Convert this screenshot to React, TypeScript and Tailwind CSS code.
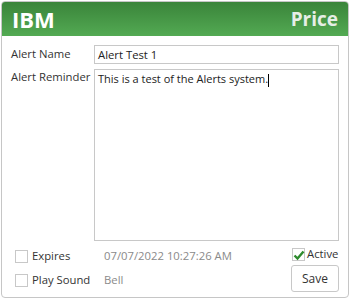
import React from 'react';

const font = { fontFamily: '"Open Sans", "Noto Sans", sans-serif' };

const CheckBox: React.FC<{ checked?: boolean }> = ({ checked }) => (
    <span className="relative inline-block w-[13px] h-[13px] border border-[#c8c8c8] bg-white shrink-0">
        {checked && (
            <svg viewBox="0 0 12 12" className="absolute left-[0px] top-[0px] w-[12px] h-[12px]">
                <path d="M1.5 6.5 L4.5 9.5 L10.5 2.5" fill="none" stroke="#2e8b2e" strokeWidth="2.4" />
            </svg>
        )}
    </span>
);

const App: React.FC = () => {
    return (
        <div className="w-[352px] h-[301px] bg-white p-[1px] pr-[3px] pb-[3px] text-[11.3px] text-[#333]" style={font}>
            <div className="h-full flex flex-col border border-[#c6c6c6] rounded-[4px] overflow-hidden">
                <div className="h-[34px] flex items-center justify-between px-[10px] bg-gradient-to-b from-[#3a843a] to-[#53aa53]">
                    <span className="text-white font-bold text-[22px] leading-none">IBM</span>
                    <span className="text-[#e6eee6] font-bold text-[19px] leading-none">Price</span>
                </div>
                <div className="flex-1 flex flex-col px-[9px] pt-[9px]">
                    <div className="flex items-center h-[19px]">
                        <span className="w-[83px] shrink-0 whitespace-nowrap">Alert Name</span>
                        <div className="flex-1 h-[19px] border border-[#c8c8c8] px-[3px] leading-[17px] text-[#222]">Alert Test 1</div>
                    </div>
                    <div className="flex mt-[5px]">
                        <span className="w-[83px] shrink-0 whitespace-nowrap leading-[15px]">Alert Reminder</span>
                        <div className="flex-1 h-[172px] border border-[#c8c8c8] px-[3px] pt-[1px] leading-[15px] text-[11px] text-[#222]">
                            This is a test of the Alerts system.<span className="inline-block w-[1px] h-[13px] bg-black align-middle" />
                        </div>
                    </div>
                    <div className="flex mt-[6px]">
                        <div className="flex flex-col gap-[9px] pl-[4px] pt-[2px]">
                            <div className="flex items-center h-[15px]">
                                <CheckBox />
                                <span className="ml-[4px] w-[72px]">Expires</span>
                                <span className="text-[#8a8a8a]">07/07/2022 10:27:26 AM</span>
                            </div>
                            <div className="flex items-center h-[15px]">
                                <CheckBox />
                                <span className="ml-[4px] w-[72px]">Play Sound</span>
                                <span className="text-[#8a8a8a]">Bell</span>
                            </div>
                        </div>
                        <div className="ml-auto flex flex-col items-start">
                            <div className="flex items-center h-[14px] mb-[4px] ml-[1px]">
                                <CheckBox checked />
                                <span className="ml-[2px]">Active</span>
                            </div>
                            <button className="w-[48px] h-[27px] border border-[#c8c8c8] rounded-[3px] bg-white text-[12px]">Save</button>
                        </div>
                    </div>
                </div>
            </div>
        </div>
    );
};

export default App;
